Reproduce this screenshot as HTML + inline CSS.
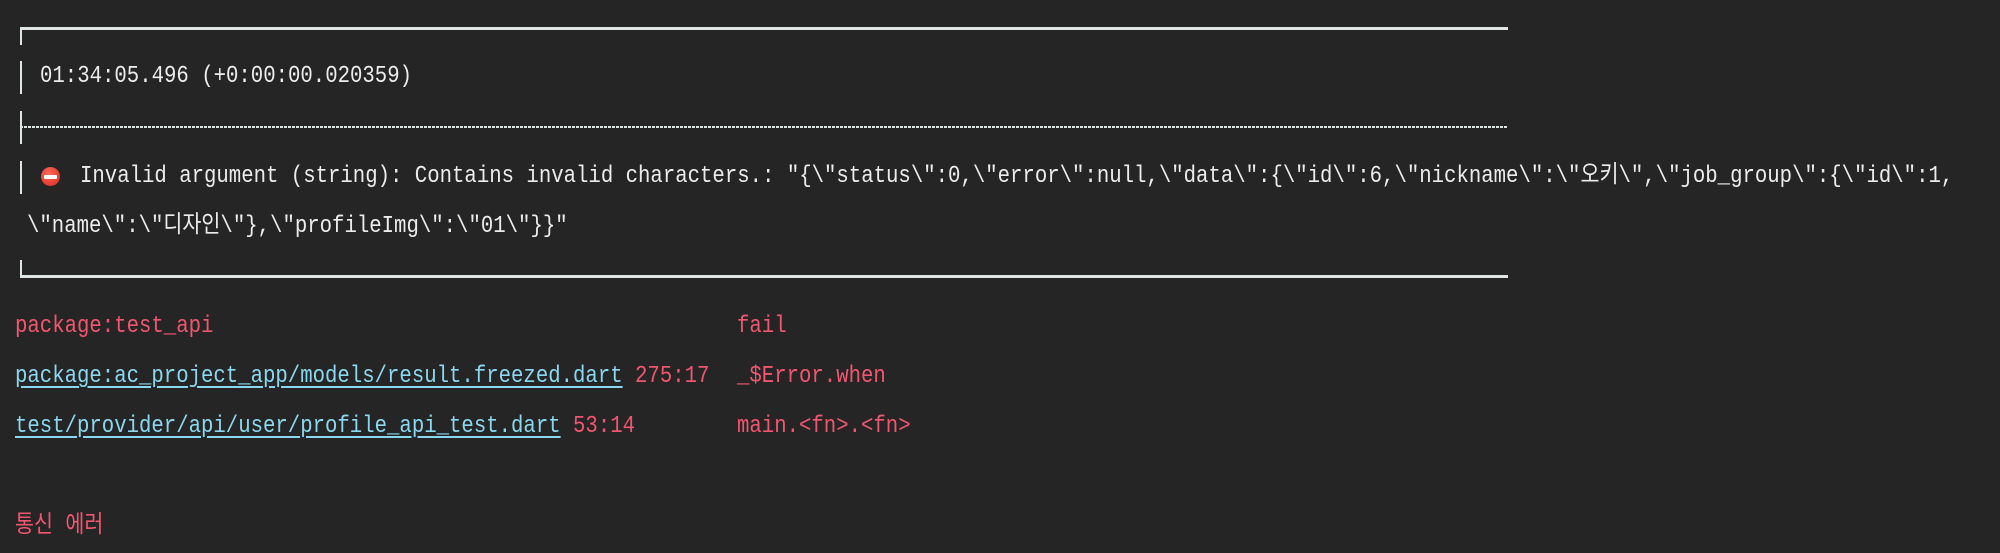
<!DOCTYPE html>
<html><head><meta charset="utf-8"><style>
html,body{margin:0;padding:0;background:#252525;width:2000px;height:553px;overflow:hidden}
.t{position:absolute;white-space:pre;font-family:"Liberation Mono","Noto Sans CJK KR",monospace;font-size:24px;line-height:50px;height:50px;color:#ececec;transform:scaleX(0.861);transform-origin:0 50%}
.r{color:#f2566f}
.l{color:#8ad8ef;text-decoration:underline;text-underline-offset:4px}
.b{position:absolute;background:#dfe6e3}
</style></head><body>
<div class="b" style="left:20px;top:27px;width:1488px;height:3px"></div>
<div class="b" style="left:20px;top:27px;width:2px;height:18px"></div>
<div class="b" style="left:20px;top:61px;width:2px;height:33px"></div>
<div class="b" style="left:20px;top:111px;width:2px;height:33px"></div>
<div style="position:absolute;left:20px;top:126px;width:1488px;height:2px;background:repeating-linear-gradient(90deg,#dfe6e3 0 3px,transparent 3px 4px)"></div>
<div class="b" style="left:20px;top:161px;width:2px;height:33px"></div>
<div class="b" style="left:20px;top:260px;width:2px;height:17px"></div>
<div class="b" style="left:20px;top:275px;width:1488px;height:3px"></div>

<div class="t" style="left:40px;top:52px">01:34:05.496 (+0:00:00.020359)</div>
<div style="position:absolute;left:41px;top:167px;width:19px;height:19px;border-radius:50%;background:radial-gradient(circle at 40% 35%,#ff6a5a,#d8261c)"></div>
<div style="position:absolute;left:44px;top:175px;width:13px;height:4px;background:#fff;border-radius:1px"></div>
<div class="t" style="left:80px;top:152px">Invalid argument (string): Contains invalid characters.: "{\"status\":0,\"error\":null,\"data\":{\"id\":6,\"nickname\":\"오키\",\"job_group\":{\"id\":1,</div>
<div class="t" style="left:27px;top:202px">\"name\":\"디자인\"},\"profileImg\":\"01\"}}"</div>

<div class="t r" style="left:15px;top:302px">package:test_api</div>
<div class="t r" style="left:737px;top:302px">fail</div>
<div class="t" style="left:15px;top:352px"><span class="l">package:ac_project_app/models/result.freezed.dart</span><span class="r"> 275:17</span></div>
<div class="t r" style="left:737px;top:352px">_$Error.when</div>
<div class="t" style="left:15px;top:402px"><span class="l">test/provider/api/user/profile_api_test.dart</span><span class="r"> 53:14</span></div>
<div class="t r" style="left:737px;top:402px">main.&lt;fn&gt;.&lt;fn&gt;</div>
<div class="t r" style="left:15px;top:502px">통신 에러</div>
</body></html>
